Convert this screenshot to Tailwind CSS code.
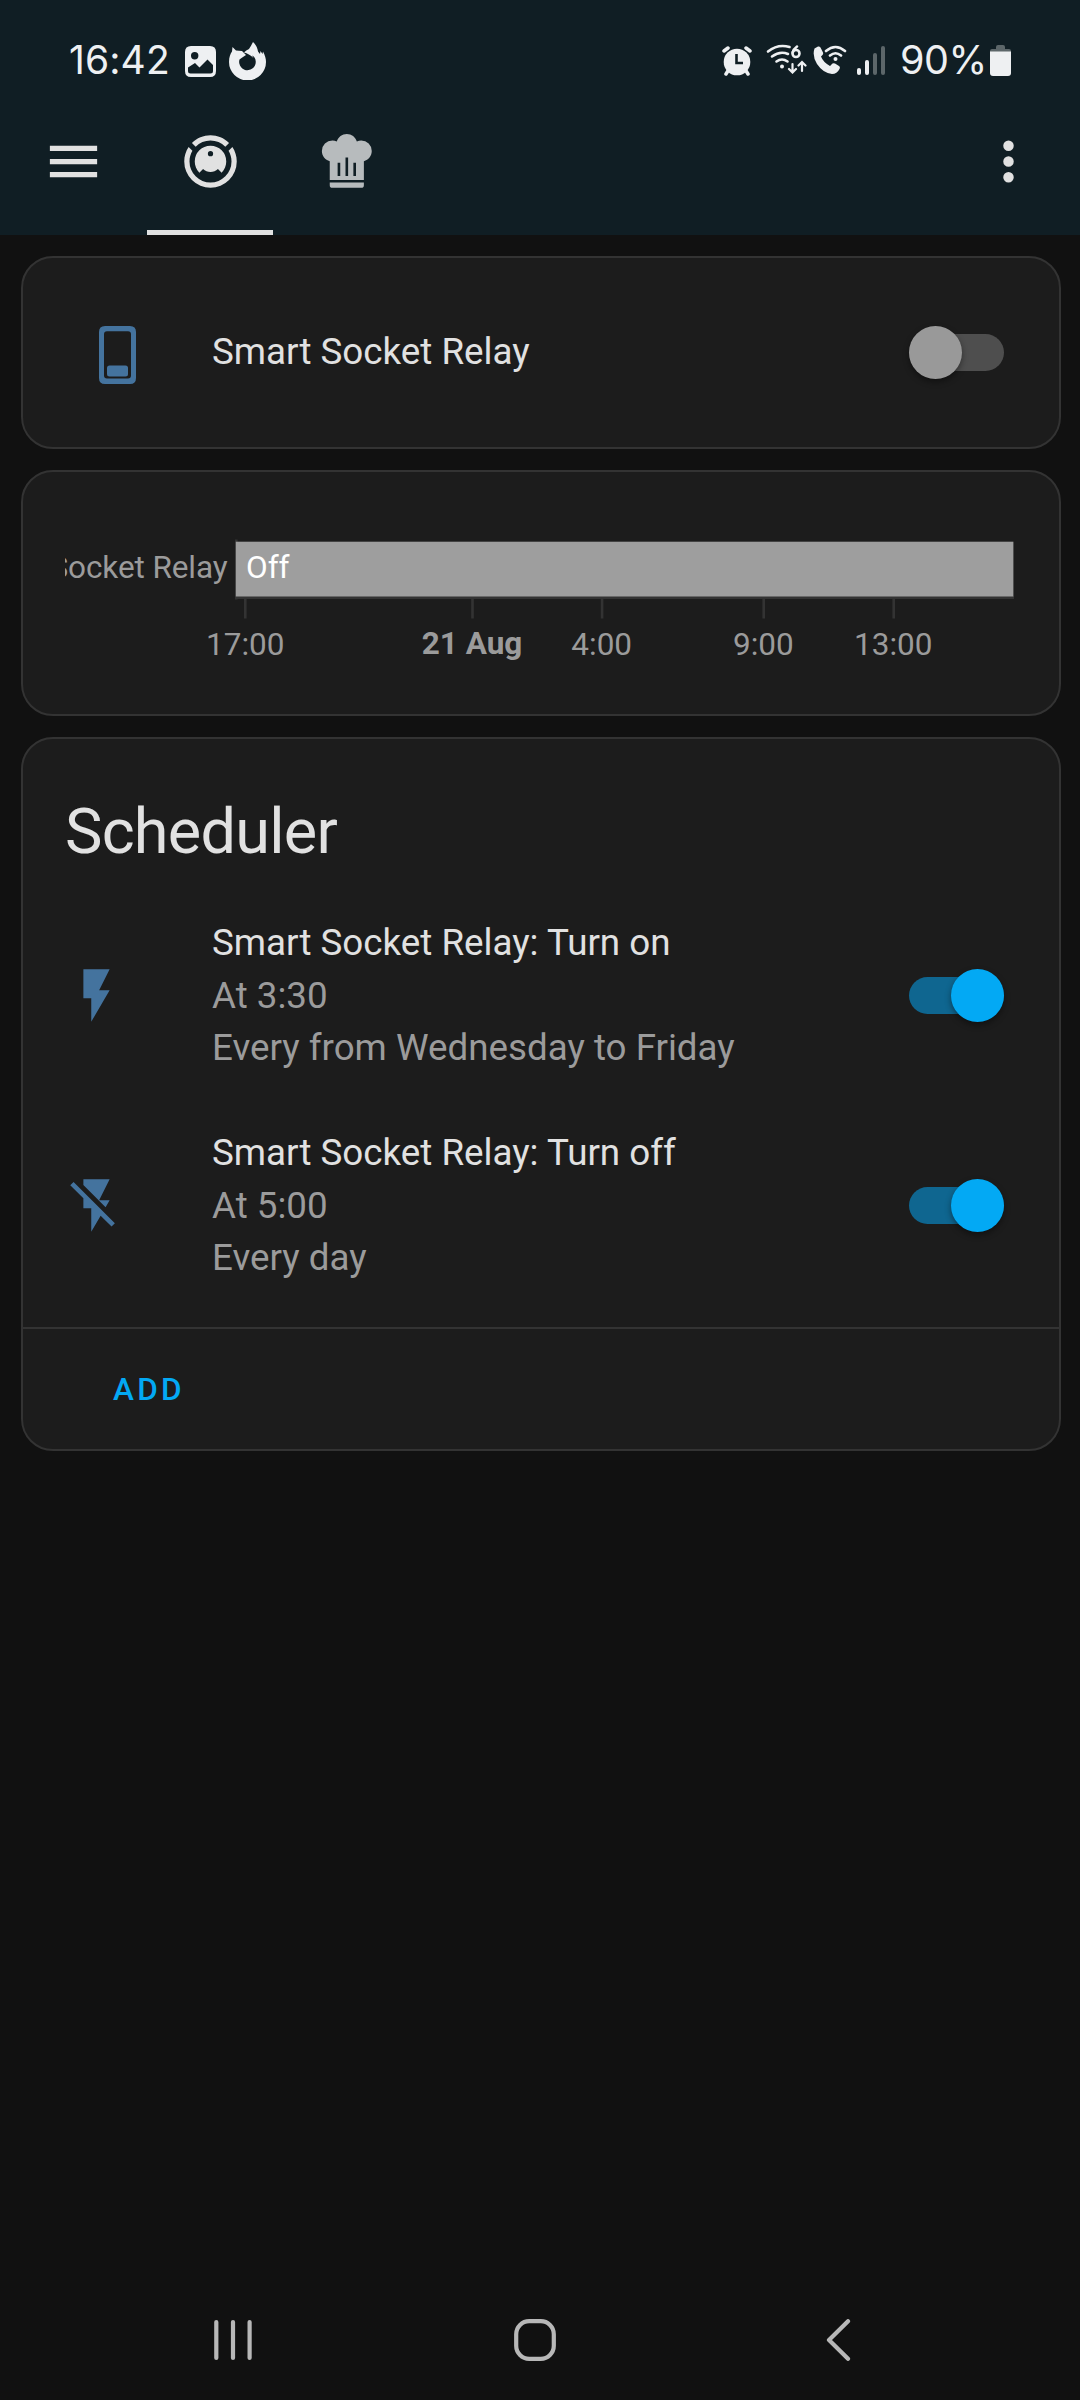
<!DOCTYPE html>
<html lang="en">
<head>
<meta charset="utf-8">
<title>Home</title>
<script src="https://cdn.jsdelivr.net/npm/@tailwindcss/browser@4"></script>
</head>
<body class="bg-[#111111]">
<div class="flex h-[2400px] w-[1080px] flex-col overflow-hidden bg-[#111111] font-['Roboto',sans-serif] text-[36.750px] leading-[52.5px] text-[#e1e1e1]">

  <!-- Status bar -->
  <div class="flex h-[87px] shrink-0 items-start justify-between bg-[#101e24] pr-[69px] pl-[69px] font-['Inter',sans-serif] text-[#eef0f2]">
    <div class="flex pt-[42px]">
      <span class="w-[116px] pt-[2px] text-[39px] leading-[32px] font-normal tracking-[0.100px]">16:42</span>
      <svg class="mt-[4px] h-[31px] w-[31px]" viewBox="0 0 31 31">
        <path fill="currentColor" fill-rule="evenodd" d="M6 0H25Q31 0 31 6V25Q31 31 25 31H6Q0 31 0 25V6Q0 0 6 0ZM9.700 6A3.700 3.700 0 1 0 9.700 13.400A3.700 3.700 0 1 0 9.700 6ZM3 21.500V25Q3 27.500 5.500 27.500H25.500Q28 27.500 28 25V19L22.500 13.500L14.500 21.500L10 17Z"/>
      </svg>
      <svg class="ml-[13px] h-[38px] w-[37px]" viewBox="0 0 37 38">
        <path fill="currentColor" fill-rule="evenodd" d="M24 0C27 3 28.500 6 29 9.500L31 12L31.500 9L33.500 12L34 9.500C36 13 37 17 37 20A18.500 18.500 0 0 1 0 20C0 15 1.500 11.500 3 9.500L3.500 5L7 8.500L13 9L17 13L12.500 16L10.500 17.500A8.300 8.300 0 1 0 25.500 15.500Q24.500 14 23 13.500L24.500 16Q20 11.500 15 10.500Q17 8 20 7Q22 4 24 0Z"/>
      </svg>
    </div>
    <div class="flex items-start pt-[42px]">
      <svg class="mt-[4px] h-[30px] w-[30px]" viewBox="0 0 30 30" fill="none" stroke="currentColor" stroke-linecap="round">
        <circle cx="15" cy="16" r="13.300" fill="currentColor" stroke="none"/>
        <path stroke-width="3.500" d="M2 5L6 2M28 5L24 2M6.500 24L4 28M23.500 24L26 28"/>
        <path stroke="#101e24" stroke-width="2.600" stroke-linecap="butt" d="M14.500 8V17H21"/>
      </svg>
      <svg class="ml-[14px] h-[32px] w-[41px]" viewBox="0 0 41 32" fill="none" stroke="currentColor" stroke-width="2.600" stroke-linecap="round">
        <path d="M2 9.500Q12 1.500 23.500 5M6 14.500Q14 8.500 22 12M10.500 19.500Q16 15.500 21.500 19.500"/>
        <circle cx="16" cy="24.500" r="2" fill="currentColor" stroke="none"/>
        <circle cx="30" cy="11.500" r="3.500"/><path d="M31 4.500Q27.500 7 26.700 10.500"/>
        <path stroke-width="2.200" d="M26.500 22V30M23 27L26.500 30.500L30 27M36 29V20M32.500 23.500L36 20L39.500 23.500"/>
      </svg>
      <svg class="ml-[6px] h-[32px] w-[34px]" viewBox="0 0 34 32">
        <path fill="currentColor" d="M1.500 6.500L5 4.500Q6.500 4 7.500 5.500L10 10.500Q10.500 12 9.500 13L8 14.500Q10 20 17 24L19.500 21.500Q20.500 21 22 21.500L26 24Q27.500 25 26.500 27Q24 32 19 32Q10 31 4 22Q-1 14 1.500 6.500Z"/>
        <path fill="none" stroke="currentColor" stroke-width="2.600" stroke-linecap="round" d="M13 9Q22.500 1 32 9M17 13.500Q22.500 9 28 13.500"/>
        <circle cx="22.500" cy="17" r="2" fill="currentColor"/>
      </svg>
      <div class="ml-[10px] flex h-[33px] items-end gap-[4px]">
        <i class="h-[7px] w-[4px] rounded-full bg-[#eef0f2]"></i>
        <i class="h-[15px] w-[4px] rounded-full bg-[#eef0f2]"></i>
        <i class="h-[22px] w-[4px] rounded-full bg-[#5c6669]"></i>
        <i class="h-[29px] w-[4px] rounded-full bg-[#5c6669]"></i>
      </div>
      <span class="ml-[15px] w-[90px] pt-[2px] text-[39.500px] leading-[32px] font-normal tracking-[-0.400px]">90%</span>
      <svg class="mt-[3px] h-[31px] w-[21px]" viewBox="0 0 21 31">
        <path fill="#5c6669" d="M6 2Q6 0 8 0H13Q15 0 15 2V4H19Q21 4 21 6V8H0V6Q0 4 2 4H6Z"/>
        <path fill="currentColor" d="M0 6.500H21V28Q21 31 18 31H3Q0 31 0 28Z"/>
      </svg>
    </div>
  </div>

  <!-- App header -->
  <header class="flex h-[148px] shrink-0 items-stretch bg-[#101e24] pr-[40px] pl-[42px]">
    <svg class="mt-[43px] size-[63px]" viewBox="0 0 24 24" fill="currentColor"><path d="M3,6H21V8H3V6M3,11H21V13H3V11M3,16H21V18H3V16Z"/></svg>
    <nav class="ml-[42px] flex gap-[9px]">
      <div class="flex w-[126px] justify-center border-b-[5px] border-[#e1e1e1] pt-[43px]">
        <svg class="ml-px size-[63px]" viewBox="0 0 24 24" fill="currentColor"><path d="M12,2C14.65,2 17.19,3.06 19.07,4.93L17.65,6.35C16.15,4.85 14.12,4 12,4C9.88,4 7.84,4.84 6.35,6.35L4.93,4.93C6.81,3.06 9.35,2 12,2M3.66,6.5L5.11,7.94C4.39,9.17 4,10.57 4,12A8,8 0 0,0 12,20A8,8 0 0,0 20,12C20,10.57 19.61,9.17 18.88,7.94L20.34,6.5C21.42,8.12 22,10.04 22,12A10,10 0 0,1 12,22A10,10 0 0,1 2,12C2,10.04 2.58,8.12 3.66,6.5M12,6A6,6 0 0,1 18,12C18,13.59 17.37,15.12 16.24,16.24L14.83,14.83C14.08,15.58 13.06,16 12,16C10.94,16 9.92,15.58 9.17,14.83L7.76,16.24C6.63,15.12 6,13.59 6,12A6,6 0 0,1 12,6M12,8A1,1 0 0,0 11,9A1,1 0 0,0 12,10A1,1 0 0,0 13,9A1,1 0 0,0 12,8Z"/></svg>
      </div>
      <div class="flex w-[126px] justify-center pt-[43px]">
        <svg class="size-[63px] text-[#b7bbbd]" viewBox="0 0 24 24" fill="currentColor"><path d="M12.5,1.5C10.73,1.5 9.17,2.67 8.67,4.37C8.14,4.13 7.58,4 7,4A4,4 0 0,0 3,8C3,9.82 4.24,11.41 6,11.87V19H19V11.87C20.76,11.41 22,9.82 22,8A4,4 0 0,0 18,4C17.42,4 16.86,4.13 16.33,4.37C15.83,2.67 14.27,1.5 12.5,1.5M12,10.5H13V17.5H12V10.5M9,12.5H10V17.5H9V12.5M15,12.5H16V17.5H15V12.5M6,20V21A1,1 0 0,0 7,22H18A1,1 0 0,0 19,21V20H6Z"/></svg>
      </div>
    </nav>
    <svg class="mt-[43px] ml-auto size-[63px]" viewBox="0 0 24 24" fill="currentColor"><path d="M12,16A2,2 0 0,1 14,18A2,2 0 0,1 12,20A2,2 0 0,1 10,18A2,2 0 0,1 12,16M12,10A2,2 0 0,1 14,12A2,2 0 0,1 12,14A2,2 0 0,1 10,12A2,2 0 0,1 12,10M12,4A2,2 0 0,1 14,6A2,2 0 0,1 12,8A2,2 0 0,1 10,6A2,2 0 0,1 12,4Z"/></svg>
  </header>

  <main class="flex flex-col gap-[21px] pt-[21px] pr-[19px] pl-[21px]">
    <!-- Entity -->
    <section class="flex h-[193px] items-center rounded-[32px] border-2 border-[#333333] bg-[#1c1c1c] pr-[55px] pl-[76px]">
      <svg class="mt-[5px] h-[58px] w-[37px]" viewBox="0 0 37 58" fill="#44739e">
        <path fill-rule="evenodd" d="M6 0H31Q37 0 37 6V52Q37 58 31 58H6Q0 58 0 52V6Q0 0 6 0ZM8 5.300Q5 5.300 5 8.300V49.500Q5 52.500 8 52.500H29Q32 52.500 32 49.500V8.300Q32 5.300 29 5.300Z"/>
        <rect x="8" y="39.500" width="21" height="11" rx="2.500"/>
      </svg>
      <span class="ml-[76px] flex-1">Smart Socket Relay</span>
      <div class="flex h-[37px] w-[95px] items-center justify-start rounded-full bg-[#4e4e4e]"><i class="size-[53px] shrink-0 rounded-full bg-[#999999] shadow-[0_3px_6px_rgba(0,0,0,0.4)]"></i></div>
    </section>

    <!-- History timeline -->
    <section class="flex h-[246px] rounded-[32px] border-2 border-[#333333] bg-[#1c1c1c] pt-[62px] pl-[42px]">
      <svg class="h-[140px] w-[960px] shrink-0" viewBox="65 534 960 140" font-size="31.500" fill="#9b9b9b">
        <text x="227.500" y="578" text-anchor="end" letter-spacing="-0.100">Smart Socket Relay</text>
        <g fill="#333333">
          <rect x="235" y="539.500" width="2.600" height="60"/>
          <rect x="235" y="596" width="779" height="3"/>
          <rect x="244" y="598" width="2.600" height="20.500"/>
          <rect x="471.200" y="598" width="2.600" height="20.500"/>
          <rect x="600.800" y="598" width="2.600" height="20.500"/>
          <rect x="762.400" y="598" width="2.600" height="20.500"/>
          <rect x="892.400" y="598" width="2.600" height="20.500"/>
        </g>
        <rect x="235.800" y="541.700" width="777.600" height="54.800" fill="#9e9e9e"/>
        <text x="246" y="578" fill="#ffffff">Off</text>
        <g text-anchor="middle">
          <text x="245.300" y="655">17:00</text>
          <text x="472" y="654" font-weight="700">21 Aug</text>
          <text x="601.700" y="655">4:00</text>
          <text x="763.300" y="655">9:00</text>
          <text x="893.300" y="655">13:00</text>
        </g>
      </svg>
    </section>

    <!-- Scheduler -->
    <section class="flex h-[714px] flex-col rounded-[32px] border-2 border-[#333333] bg-[#1c1c1c]">
      <h1 class="pt-[51px] pl-[42px] text-[63px] leading-[84px] tracking-[-0.76px]">Scheduler</h1>
      <div class="mt-[42px] flex h-[158px] items-center pr-[55px] pl-[42px]">
        <svg class="size-[63px]" viewBox="0 0 24 24" fill="#44739e"><path d="M7,2V13H10V22L17,10H13L17,2H7Z"/></svg>
        <div class="ml-[84px] flex-1 pt-[2px] text-[#9b9b9b]">
          <div class="text-[#e1e1e1]">Smart Socket Relay: Turn on</div>
          <div>At 3:30</div>
          <div>Every from Wednesday to Friday</div>
        </div>
        <div class="flex h-[37px] w-[95px] items-center justify-end rounded-full bg-[#0f6690]"><i class="size-[53px] shrink-0 rounded-full bg-[#03a9f4] shadow-[0_3px_6px_rgba(0,0,0,0.4)]"></i></div>
      </div>
      <div class="mt-[52px] flex h-[158px] items-center pr-[55px] pl-[42px]">
        <svg class="size-[63px]" viewBox="0 0 24 24" fill="#44739e"><path d="M17,10H13L17,2H7V4.18L15.46,12.64M3.27,3L2,4.27L7,9.27V13H10V22L13.58,15.86L17.73,20L19,18.73L3.27,3Z"/></svg>
        <div class="ml-[84px] flex-1 pt-[2px] text-[#9b9b9b]">
          <div class="text-[#e1e1e1]">Smart Socket Relay: Turn off</div>
          <div>At 5:00</div>
          <div>Every day</div>
        </div>
        <div class="flex h-[37px] w-[95px] items-center justify-end rounded-full bg-[#0f6690]"><i class="size-[53px] shrink-0 rounded-full bg-[#03a9f4] shadow-[0_3px_6px_rgba(0,0,0,0.4)]"></i></div>
      </div>
      <div class="mt-auto flex h-[122px] items-center border-t-2 border-[#333333] pt-[2px] pl-[90px] text-[31.500px] font-medium tracking-[3.300px] text-[#03a9f4]">ADD</div>
    </section>
  </main>

  <!-- System navigation -->
  <div class="mt-auto flex h-[120px] shrink-0 items-center pl-[214px] text-[#b8b8b8]">
    <svg class="h-[42px] w-[38px]" viewBox="0 0 38 42" stroke="currentColor" stroke-width="4.200" stroke-linecap="round"><path d="M2.300 3V39M19 3V39M35.600 3V39"/></svg>
    <svg class="ml-[262px] h-[42px] w-[42px]" viewBox="0 0 42 42" fill="none" stroke="currentColor" stroke-width="4.200"><rect x="2.200" y="2.200" width="37.600" height="37.600" rx="13"/></svg>
    <svg class="ml-[270px] h-[42px] w-[25px]" viewBox="0 0 25 42" fill="none" stroke="currentColor" stroke-width="4.200" stroke-linecap="round" stroke-linejoin="round"><path d="M22 2.200L3 21L22 39.800"/></svg>
  </div>
</div>
</body>
</html>
